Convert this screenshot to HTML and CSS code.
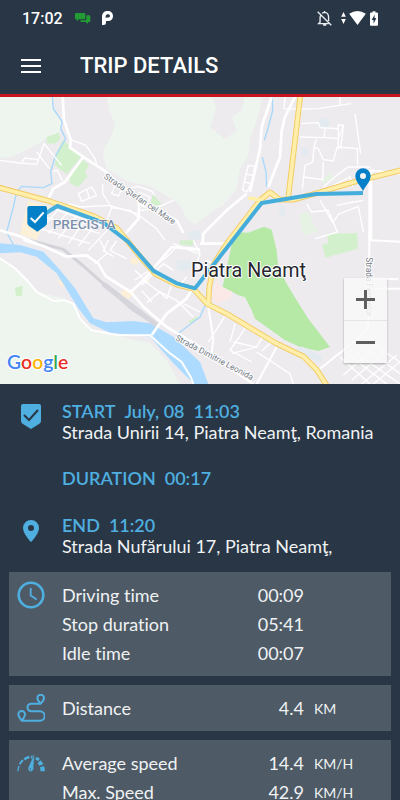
FILE: index.html
```html
<!DOCTYPE html>
<html lang="en">

<head>
    <meta charset="UTF-8">
    <meta name="viewport" content="width=device-width, initial-scale=1">
    <title>Trip details</title>
    <link rel="stylesheet" href="styles.css">
</head>

<body>
    <header class="top">
        <div class="statusbar">
            <span class="clock">17:02</span>
            <svg class="chat" viewBox="0 0 48 33" aria-hidden="true">
                <path fill="#229b35" d="M3 0h25q3 0 3 3v13q0 3-3 3H12l-7 6v-6H3q-3 0-3-3V3q0-3 3-3z" />
                <path fill="#229b35" d="M34 7h9q3 0 3 3v14q0 3-3 3h-4v6l-7-6H19q-3 0-3-3v-2h14q4 0 4-5z" />
            </svg>
            <svg class="parking" viewBox="0 0 33 42" aria-hidden="true">
                <path fill="#fff" fill-rule="evenodd" d="M0 42V17C0 6 7 0 17 0s16 6 16 15-6 15-15 15h-6v5q0 7-7 7zM17 10c-4 0-6 3-6 7v5l4-3c6 2 9-1 9-4s-3-5-7-5z" />
            </svg>
            <span class="space"></span>
            <svg class="bell" viewBox="0 0 44 44" fill="none" stroke="#e9edf0" stroke-width="4" aria-hidden="true">
                <path d="M2 2l40 40M11 12q-2 4-2 9v12l-4 4h29M15 7q3-3 8-3 10 1 11 13v12M22 0v4M18 41h9" />
            </svg>
            <svg class="updown" viewBox="0 0 14 36" fill="#fff" aria-hidden="true">
                <path d="M7 0l7 14H0zM7 36L0 21h14z" />
            </svg>
            <svg class="wifi" viewBox="0 0 50 42" fill="#fff" aria-hidden="true">
                <path d="M0 8Q25-8 50 8L25 42z" />
            </svg>
            <svg class="battery" viewBox="0 0 25 45" aria-hidden="true">
                <path fill="#fff" d="M8 0h9v4h5q3 0 3 3v35q0 3-3 3H3q-3 0-3-3V7q0-3 3-3h5z" />
                <path fill="#283645" d="M15 10L5 27h6v12l9-18h-6z" />
            </svg>
        </div>
        <div class="appbar">
            <button class="menu" aria-label="Menu"><i></i><i></i><i></i></button>
            <h1>TRIP DETAILS</h1>
        </div>
    </header>

    <main>
        <section class="map">
            <svg class="kort" viewBox="0 0 1200 861" role="img" aria-label="Map of the trip in Piatra Neamţ">
                <rect width="1200" height="861" fill="#eeebef" />
                <!-- hills and woods -->
                <g fill="#edf5ee">
                    <path d="M0 0H155L162 35 185 72 180 105 140 122 120 138 85 155 30 182H0z" />
                    <path d="M320 0H785L780 40 765 85 750 125 745 175 720 215 710 275 670 325 640 340 600 372 585 382 560 365 540 325 515 305 470 280 445 265 390 255 350 235 320 215 310 180 310 160 335 115 345 85 330 45z" />
                    <path d="M0 484L45 514 80 549 110 585 190 604 220 620 240 665 275 700 350 714 400 728 450 738 500 790 540 861H0z" />
                </g>
                <path fill="#eeebef" d="M635 0L648 35 630 90 675 127 710 100 695 60 725 40 735 0z" />
                <!-- parks -->
                <g fill="#d3f0cd">
                    <path d="M188 128L245 178 200 232 165 205 168 170zM140 120L175 107 182 125 165 140 140 138zM243 184L267 204 255 225 262 240 235 270 212 262 208 245z" />
                    <path d="M458 292L485 320 470 326 452 318zM45 572L68 566 66 598 48 596zM540 430L580 430 578 447 540 442z" />
                    <path d="M980 410L1072 408 1074 455 977 482 966 443 986 438z" />
                    <path d="M565 672L593 658 590 668 570 680z" />
                </g>
                <path fill="#e6f3e4" d="M895 352L925 345 952 405 912 418zM965 250L995 225 1000 240 970 262z" />
                <path fill="#b5e9a5" d="M700 420L712 406 745 407 792 389 815 398 830 460 835 510 860 560 890 610 925 665 990 750 955 762 900 750 855 730 800 690 765 665 755 640 735 600 715 595 668 569z" />
                <path fill="#fbe9e8" d="M650 545L665 570 698 585 690 605 650 622 635 600z" />
                <!-- shopping and civic blocks -->
                <path fill="#fdf0d8" d="M85 310L150 330 110 430 60 412zM395 480L425 488 408 505 390 498zM365 580L405 585 385 605 360 598zM430 540L450 550 440 560zM175 548L195 560 195 572 178 562z" />
                <path fill="#e3eaf0" d="M955 62L987 68 987 94 957 90zM904 150L926 155 926 178 905 176zM840 325L858 330 852 358 836 354zM530 490L570 488 578 510 550 524 528 515zM560 405L600 400 605 428 565 425zM905 748L968 778 960 800 890 760z" />
                <!-- water -->
                <path fill="#acdbff" d="M0 439L60 444 130 464 180 519 225 574 280 664 320 676 400 672 450 679 520 719 600 795 625 861H582L520 799 450 719 330 707 270 679 235 634 170 529 110 479 60 466 0 469z" />
                <g fill="none" stroke="#a9d8fa" stroke-width="4">
                    <path d="M157 0L160 35 187 75 182 95 197 125 180 155 165 180 152 225 156 260 130 272 65 268 50 285 40 330 20 405 40 444" />
                    <path d="M817 0L818 40 805 90 793 130M787 180L798 225 800 270" />
                    <path d="M528 715L560 690 600 660 612 632 617 625" />
                </g>
                <!-- railway -->
                <path fill="none" stroke="#d3d3d9" stroke-width="9" d="M90 430L190 457 250 507 340 587 400 639 470 684" />
                <path fill="none" stroke="#d5d5db" stroke-width="15" d="M310 561L380 615 470 684" />
                <!-- side streets -->
                <g fill="none" stroke="#fff" stroke-width="4">
                    <path d="M0 190L60 198 110 202 132 140 185 205M65 195L75 183 115 188M110 165L148 215M160 222L172 220 188 252M212 128L258 145 285 185 290 200M308 260L308 290 335 332 320 370M235 290L275 270 290 295 245 313zM260 277L268 302M345 265L335 290 355 297 367 275M205 320L240 330 330 325 410 350 470 395 495 430" />
                    <path d="M380 275L415 268 455 282 465 295M415 285L450 300 440 325M420 340L465 335 520 310M335 332L390 340 420 365" />
                    <path d="M120 400L190 320M145 410L215 333M175 425L240 345M205 440L270 350M235 448L300 365M265 460L335 385M120 355L300 410M105 390L270 440M160 335L345 400" />
                    <path d="M300 430L320 470 285 500M325 429L310 461 340 478M350 432L330 460 380 485M405 549L440 525 500 480 530 450 595 455M425 565L490 500 520 520M390 585L430 550 485 590M440 617L480 585 500 605M470 579L530 611 580 660M500 555L535 570 560 540M405 520L445 560M520 550L500 605M550 620L600 645M455 615L425 580M580 430L600 470 590 500 600 525M520 440L595 470" />
                    <path d="M0 484L45 514 80 549 110 585 160 612 195 610 220 620 240 665 275 700 350 714 450 715 505 765 545 795 572 840 580 861" stroke-width="6" />
                    <path d="M855 0L852 35 905 36 955 35 1053 20M1020 0V25M905 80L955 77 960 92 1015 95M900 120L975 122 1015 125 1030 85 1015 84 1015 157M975 92L972 122M950 125L942 150 955 155 970 188 1000 192 1012 150 1072 155 1073 205M942 150L938 195 915 205 907 275M910 240L968 248 970 195M1022 155L1030 90" />
                    <path d="M745 205L765 208 755 255 740 285 727 278zM738 230L757 236M733 255L752 260M970 270L1010 235 1045 210 1110 210M1000 265L1050 240 1058 270M920 320L935 345 985 340 1012 405 980 415 945 425M960 310L1000 380M1010 325L1045 318 1090 310M1000 375L1015 352 1075 328 1090 405M1065 50L1082 170" />
                    <path d="M610 411L605 440M620 490L650 505M674 659L625 735M705 680L690 735M735 695L690 760 755 795M790 715L770 750 700 735M770 765L870 830 880 861M695 770L770 750M815 735L785 762M1020 780L1110 861M1035 765L1160 861M1050 755L1200 861M1085 745L1200 830M1110 735L1200 795M1030 835L1130 745M1055 850L1160 760M1085 861L1190 775M1120 861L1200 795" />
                </g>
                <!-- streets -->
                <g fill="none" stroke="#fff" stroke-width="8" stroke-linejoin="round">
                    <path d="M188 0L192 70 212 128 210 152 250 180 315 222 350 255 410 300 417 320 416 365 372 415M250 180L195 255 160 275 145 305M415 320L480 345 530 370 550 408M0 400L60 418 110 440" />
                    <path d="M70 428L130 447 200 479 260 475 295 500 318 538 392 585M392 585L430 550 515 450 600 458M392 585L430 629 500 690 600 750 760 861" />
                    <path d="M455 714L500 650 560 605 580 570M885 0L855 60 845 100 840 180 805 270M815 0L785 90 780 155 750 285M740 290L680 340 610 410 608 440M600 440L680 440 760 350" />
                    <path d="M1110 235L1112 270 1108 440 1105 690 1080 720 960 815M1110 220L1200 230M1110 575H1200M830 750L770 861M625 630L640 725 635 770M1113 430L1200 434M1108 544L1195 547" stroke-width="6" />
                    <path d="M1111 220V432" stroke-width="12" />
                </g>
                <!-- main roads, casing first -->
                <g fill="none" stroke="#f3cc66" stroke-width="17" stroke-linejoin="round">
                    <path id="main" d="M-5 271L150 313 280 357 350 393 420 478 465 530 530 563 580 575 622 621 680 650 830 740 910 778 950 818 980 865" />
                    <path id="east" d="M680 440L780 310 810 286 840 308 880 308 960 286 1070 253 1210 218" />
                    <path id="north" d="M901 -5L865 300" />
                    <path id="center" d="M680 440L642 500 628 570 625 625" />
                </g>
                <g fill="none" stroke="#ffefaa" stroke-width="11" stroke-linejoin="round">
                    <path d="M-5 271L150 313 280 357 350 393 420 478 465 530 530 563 580 575 622 621 680 650 830 740 910 778 950 818 980 865" />
                    <path d="M680 440L780 310 810 286 840 308 880 308 960 286 1070 253 1210 218" />
                    <path d="M901 -5L865 300M680 440L642 500 628 570 625 625M745 303L790 310" />
                </g>
                <!-- driven route -->
                <path fill="none" stroke="#45addb" stroke-width="12" stroke-linejoin="round" d="M112 378L122 358 172 327 310 377 385 435 460 521 530 559 585 574 600 555 690 440 785 318 948 291 1089 288" />
                <!-- street names -->
                <g class="street">
                    <text transform="translate(310 242) rotate(34)">Strada Ştefan cel Mare</text>
                    <text transform="translate(525 728) rotate(28)">Strada Dimitrie Leonida</text>
                    <text transform="translate(1097 481) rotate(90)">Strada Fermelor</text>
                </g>
                <text class="precista" x="158" y="397">PRECISTA</text>
                <text class="city" x="573" y="541">Piatra Neamţ</text>
                <!-- markers -->
                <path fill="#0380c8" d="M88 327h47q6 0 6 6v45q0 5-5 9l-24 17-25-17q-5-4-5-9v-45q0-6 6-6z" />
                <path fill="none" stroke="#fff" stroke-width="6" d="M92 363l13 12 26-29" />
                <path fill="#0380c8" d="M1089 282c-5-12-23-28-23-45a23 23 0 0 1 46 0c0 17-18 33-23 45z" />
                <circle cx="1089" cy="237" r="9" fill="#f4f4f6" />
                <text class="google" x="21" y="817"><tspan fill="#4285f4">G</tspan><tspan fill="#ea2f25">o</tspan><tspan fill="#fbb405">o</tspan><tspan fill="#4285f4">g</tspan><tspan fill="#34a853">l</tspan><tspan fill="#ea2f25">e</tspan></text>
            </svg>
            <div class="zoom">
                <button class="plus" aria-label="Zoom in"></button>
                <button class="minus" aria-label="Zoom out"></button>
            </div>
        </section>

        <section class="trip">
            <div class="stop">
                <svg viewBox="0 0 28 28" aria-hidden="true">
                    <path fill="#4fafe0" d="M6 1h16q2 0 2 2v15q0 2-2 3l-8 5-8-5q-2-1-2-3V3q0-2 2-2z" />
                    <path fill="none" stroke="#283645" stroke-width="2" d="M7 12l5 5 9-10" />
                </svg>
                <div>
                    <h2><span>START</span><span>July, 08</span><span>11:03</span></h2>
                    <p>Strada Unirii 14, Piatra Neamţ, Romania</p>
                </div>
            </div>
            <div class="stop">
                <h2 class="duration"><span>DURATION</span><span>00:17</span></h2>
            </div>
            <div class="stop">
                <svg viewBox="0 0 28 28" aria-hidden="true">
                    <path fill="#4fafe0" fill-rule="evenodd" d="M14 3a8 8 0 0 0-8 8c0 6 8 14 8 14s8-8 8-14a8 8 0 0 0-8-8zm0 5a3 3 0 1 1 0 6 3 3 0 0 1 0-6z" />
                </svg>
                <div>
                    <h2><span>END</span><span>11:20</span></h2>
                    <p>Strada Nufărului 17, Piatra Neamţ,</p>
                </div>
            </div>
        </section>

        <section class="cards">
            <article class="card">
                <svg viewBox="0 0 28 28" fill="none" stroke="#4fafe0" aria-hidden="true">
                    <circle cx="14" cy="14" r="12.3" stroke-width="2.6" />
                    <path stroke-width="1.8" d="M13.7 7v7.5l6 4" />
                </svg>
                <table>
                    <tr><th scope="row">Driving time</th><td class="value">00:09</td><td class="unit"></td></tr>
                    <tr><th scope="row">Stop duration</th><td class="value">05:41</td><td class="unit"></td></tr>
                    <tr><th scope="row">Idle time</th><td class="value">00:07</td><td class="unit"></td></tr>
                </table>
            </article>
            <article class="card">
                <svg viewBox="0 0 84 84" fill="none" stroke="#4fafe0" stroke-width="6" stroke-linejoin="round" aria-hidden="true">
                    <path d="M71 29H43a11 11 0 0 0 0 23h26a14 14 0 0 1 0 28H14C8 72 4 67 4 61a10 10 0 0 1 20 0c0 7-5 13-10 19" />
                    <path d="M71 29C65 23 61 18 61 12a10 10 0 0 1 20 0c0 6-4 11-10 17z" />
                </svg>
                <table>
                    <tr><th scope="row">Distance</th><td class="value">4.4</td><td class="unit">KM</td></tr>
                </table>
            </article>
            <article class="card">
                <svg viewBox="0 0 84 84" fill="none" stroke="#4fafe0" aria-hidden="true">
                    <path stroke-width="4" d="M3 67q0-9 3-16" />
                    <path stroke-width="6" d="M8 46q4-8 10-13" />
                    <path stroke-width="8" d="M22 31q7-5 15-7" />
                    <path stroke-width="9" d="M42 24l7 1M57 27q5 3 9 6" />
                    <path stroke-width="13" d="M66 38q5 5 7 10M75 53q2 6 2 14" />
                    <path fill="#4fafe0" stroke="#4e5a65" stroke-width="2" d="M53 11l-3 48q-1 9-10 9-9-2-7-12z" />
                    <circle cx="40" cy="60" r="2" fill="#4e5a65" stroke="none" />
                </svg>
                <table>
                    <tr><th scope="row">Average speed</th><td class="value">14.4</td><td class="unit">KM/H</td></tr>
                    <tr><th scope="row">Max. Speed</th><td class="value">42.9</td><td class="unit">KM/H</td></tr>
                </table>
            </article>
        </section>
    </main>
</body>

</html>
```

FILE: styles.css
```css
* {
    margin: 0;
    padding: 0;
    box-sizing: border-box;
}

body {
    display: flex;
    flex-direction: column;
    height: 100vh;
    overflow: hidden;
    background: #283645;
    color: #f0f2f4;
    font-family: Lato, sans-serif;
    font-size: 18px;
    font-variant-ligatures: none;
}

svg {
    display: block;
    flex: none;
}

button {
    border: none;
    cursor: pointer;
}

/* ---------- header ---------- */
.top {
    flex: none;
    border-bottom: 3px solid #c8141e;
    color: #fff;
    font-family: Roboto, sans-serif;
}

.statusbar {
    display: flex;
    align-items: center;
    height: 36px;
    padding: 0 22px;
}

.clock {
    font-size: 16px;
    font-weight: 500;
}

.chat {
    width: 16px;
    height: 11px;
    margin-left: 12px;
}

.parking {
    width: 11px;
    height: 14px;
    margin-left: 11px;
}

.space {
    flex: 1;
}

.bell {
    width: 15px;
    height: 15px;
    margin-right: 9px;
}

.updown {
    width: 5px;
    height: 12px;
    margin-right: 3px;
}

.wifi {
    width: 17px;
    height: 14px;
    margin-right: 4px;
}

.battery {
    width: 8px;
    height: 15px;
}

.appbar {
    display: flex;
    align-items: center;
    height: 58px;
    padding: 1px 21px 0;
    gap: 39px;
}

.menu {
    display: flex;
    flex-direction: column;
    gap: 4px;
    width: 20px;
    background: none;
}

.menu i {
    width: 20px;
    height: 2px;
    background: #fff;
}

h1 {
    font-size: 22px;
    font-weight: 500;
}

main {
    flex: 1;
    min-height: 0;
    overflow: auto;
    scrollbar-width: none;
}

/* ---------- map ---------- */
.map {
    position: relative;
}

.kort {
    width: 100%;
    height: auto;
}

.kort text {
    font-family: Roboto, sans-serif;
    paint-order: stroke;
    stroke: #fff;
    stroke-width: 6px;
    stroke-linejoin: round;
}

.street {
    font-size: 25px;
    fill: #747b85;
}

.kort .precista {
    font-size: 41px;
    font-weight: 500;
    fill: #7c8fab;
    stroke-width: 3px;
}

.city {
    font-size: 59px;
    fill: #26272e;
}

.kort .google {
    font-family: Lato, sans-serif;
    font-size: 58px;
    font-weight: 600;
}

.zoom {
    position: absolute;
    right: 13px;
    bottom: 21px;
    display: flex;
    flex-direction: column;
    gap: 1px;
    background: rgba(215, 215, 215, 0.4);
    box-shadow: 0 1px 2px rgba(0, 0, 0, 0.3);
}

.zoom button {
    display: grid;
    place-items: center;
    width: 43px;
    height: 42px;
    background: rgba(255, 255, 255, 0.7);
}

.zoom button::before,
.plus::after {
    content: "";
    grid-area: 1 / 1;
    width: 19px;
    height: 3px;
    background: #5e5e5e;
}

.zoom .plus::after {
    width: 3px;
    height: 19px;
}

/* ---------- start, duration, end ---------- */
.trip {
    display: flex;
    flex-direction: column;
    gap: 25px;
    padding: 16px 17px;
    line-height: 20px;
}

.stop {
    display: flex;
    gap: 17px;
}

.stop svg {
    width: 28px;
    height: 28px;
    margin-top: 3px;
}

.stop h2 {
    display: flex;
    gap: 9px;
    color: #4fafe0;
    font-size: 18px;
    font-weight: 600;
    line-height: 22px;
}

.stop .duration {
    margin-left: 45px;
}

/* ---------- cards ---------- */
.cards {
    display: flex;
    flex-direction: column;
    gap: 9px;
    padding: 0 9px 9px;
}

.card {
    display: flex;
    align-items: flex-start;
    gap: 17px;
    padding: 9px 8px 8px;
    background: #4e5a65;
}

.card svg {
    width: 28px;
    height: 28px;
}

table {
    flex: 1;
    border-collapse: collapse;
    line-height: 29px;
}

th {
    font-weight: normal;
    text-align: left;
}

.value {
    text-align: right;
}

.unit {
    width: 79px;
    padding-left: 10px;
    font-size: 14px;
}
```
